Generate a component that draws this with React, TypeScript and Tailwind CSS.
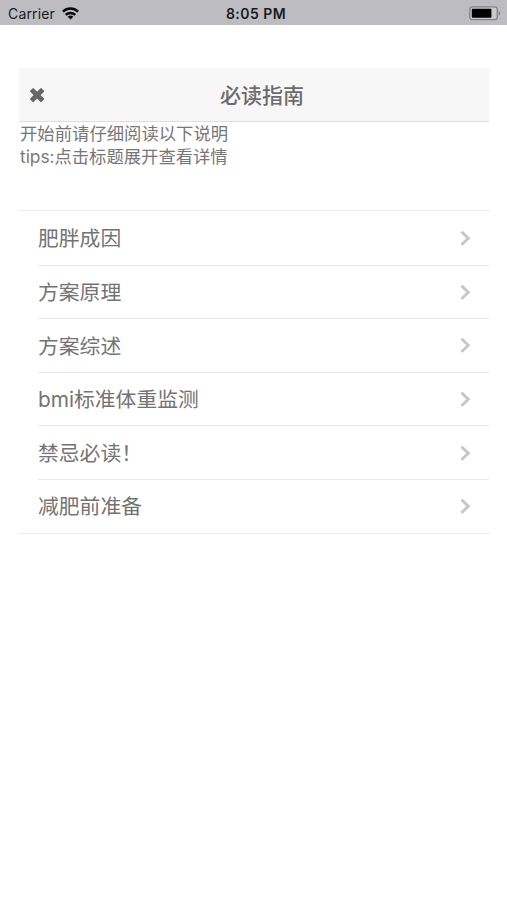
import React from 'react';

const guides = [
  { id: 1, title: '肥胖成因' },
  { id: 2, title: '方案原理' },
  { id: 3, title: '方案综述' },
  { id: 4, title: 'bmi标准体重监测' },
  { id: 5, title: '禁忌必读！' },
  { id: 6, title: '减肥前准备' },
];

const StatusBar: React.FC = () => (
  <div className="grid h-[25px] grid-cols-3 items-center bg-[#bdbdc1] pl-2 pr-1.5 font-['Inter','Liberation_Sans',sans-serif] text-[#1c1c20]">
    <div className="flex items-center gap-[7px] pt-0.5">
      <span className="text-[14px] leading-none tracking-[0.15px]">Carrier</span>
      <svg width="17" height="13" viewBox="0 0 17 13" fill="none" stroke="#08080a" strokeWidth="2.4">
        <path d="M0.9 4.7C5.2 0.5 11.8 0.5 16.1 4.7" />
        <path d="M3.7 7.9C6.4 5.3 10.6 5.3 13.3 7.9" />
        <path d="M5.7 9.7C7.4 8.1 9.6 8.1 11.3 9.7L8.5 12.4Z" fill="#08080a" stroke="none" />
      </svg>
    </div>
    <span className="pl-[3px] pt-[3px] text-center text-[14px] font-semibold leading-none tracking-[0.45px]">8:05 PM</span>
    <svg className="mt-px justify-self-end" width="32" height="15" viewBox="0 0 32 15">
      <rect x="0.8" y="0.8" width="27.4" height="12.9" rx="2.6" fill="#c9c9cd" stroke="#838387" strokeWidth="1.3" />
      <rect x="2.8" y="2.8" width="19.6" height="8.9" rx="0.8" fill="#020202" />
      <path d="M29.7 5v4.6c2-.8 2-3.8 0-4.6z" fill="#838387" />
    </svg>
  </div>
);

const Header: React.FC = () => (
  <header className="grid h-[54px] grid-cols-[1fr_auto_1fr] items-center border-b border-[#dedede] bg-[#f7f7f7] pl-[11px]">
    <button type="button" aria-label="关闭" className="w-4 pt-0.5">
      <svg width="15" height="15" viewBox="0 0 15 15" fill="#666666">
        <rect x="-0.9" y="4.7" width="16" height="4.9" rx="1" transform="rotate(45 7.1 7.15)" />
        <rect x="-0.9" y="4.7" width="16" height="4.9" rx="1" transform="rotate(-45 7.1 7.15)" />
      </svg>
    </button>
    <h1 className="pl-[5px] pt-0.5 text-[21px] font-medium leading-none text-[#6c6c6e]">必读指南</h1>
  </header>
);

const GuideList: React.FC = () => (
  <ul className="mt-[42px] border-y border-[#ececec]">
    {guides.map((guide, index) => (
      <li key={guide.id} className="pl-[19px]">
        <div
          className={`flex h-[53.6px] items-center justify-between pr-[17px] ${
            index > 0 ? 'border-t border-[#e8e8e8]' : ''
          }`}
        >
          <span className="pt-[3px] text-[20.8px] leading-none text-[#737375]">{guide.title}</span>
          <svg width="12" height="16" viewBox="0 0 12 16" fill="none" stroke="#c6c6c6" strokeWidth="2.9">
            <path d="M1.5 1.7L8.3 8.2L1.5 14.7" />
          </svg>
        </div>
      </li>
    ))}
  </ul>
);

const App: React.FC = () => {
  return (
    <div className="min-h-screen bg-white font-['Inter','Noto_Sans_CJK_SC',sans-serif]">
      <StatusBar />
      <main className="ml-[19px] mr-[18px] pt-[43px]">
        <Header />
        <div className="pl-px text-[17.35px] leading-[23px] text-[#777779]">
          <p>开始前请仔细阅读以下说明</p>
          <p className="tracking-[-0.03px]">tips:点击标题展开查看详情</p>
        </div>
        <GuideList />
      </main>
    </div>
  );
};

export default App;
